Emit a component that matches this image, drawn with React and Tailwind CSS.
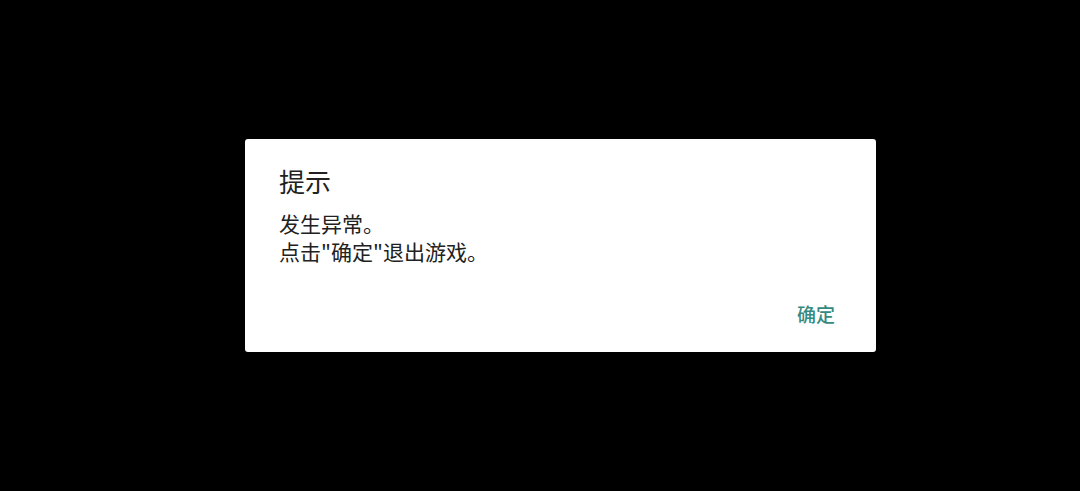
export default function App() {
  return (
    <div
      className="w-[1080px] h-[491px] bg-black flex items-center justify-center pl-[41px]"
      style={{ fontFamily: '"Noto Sans CJK SC", "Noto Sans", sans-serif' }}
    >
      <div className="w-[631px] h-[213px] bg-white rounded-[3px] flex flex-col pl-[34px] pr-[41px] pt-[24px] shadow-lg">
        <h2 className="text-[26px] leading-[36px] text-[#212121] font-normal">提示</h2>
        <div className="mt-[10px] text-[21px] leading-[28px] text-[#212121]">
          <p>发生异常。</p>
          <p>点击"确定"退出游戏。</p>
        </div>
        <div className="flex justify-end mt-auto mb-[25px]">
          <button className="text-[19px] leading-[26px] text-[#358a80] font-medium">确定</button>
        </div>
      </div>
    </div>
  );
}
